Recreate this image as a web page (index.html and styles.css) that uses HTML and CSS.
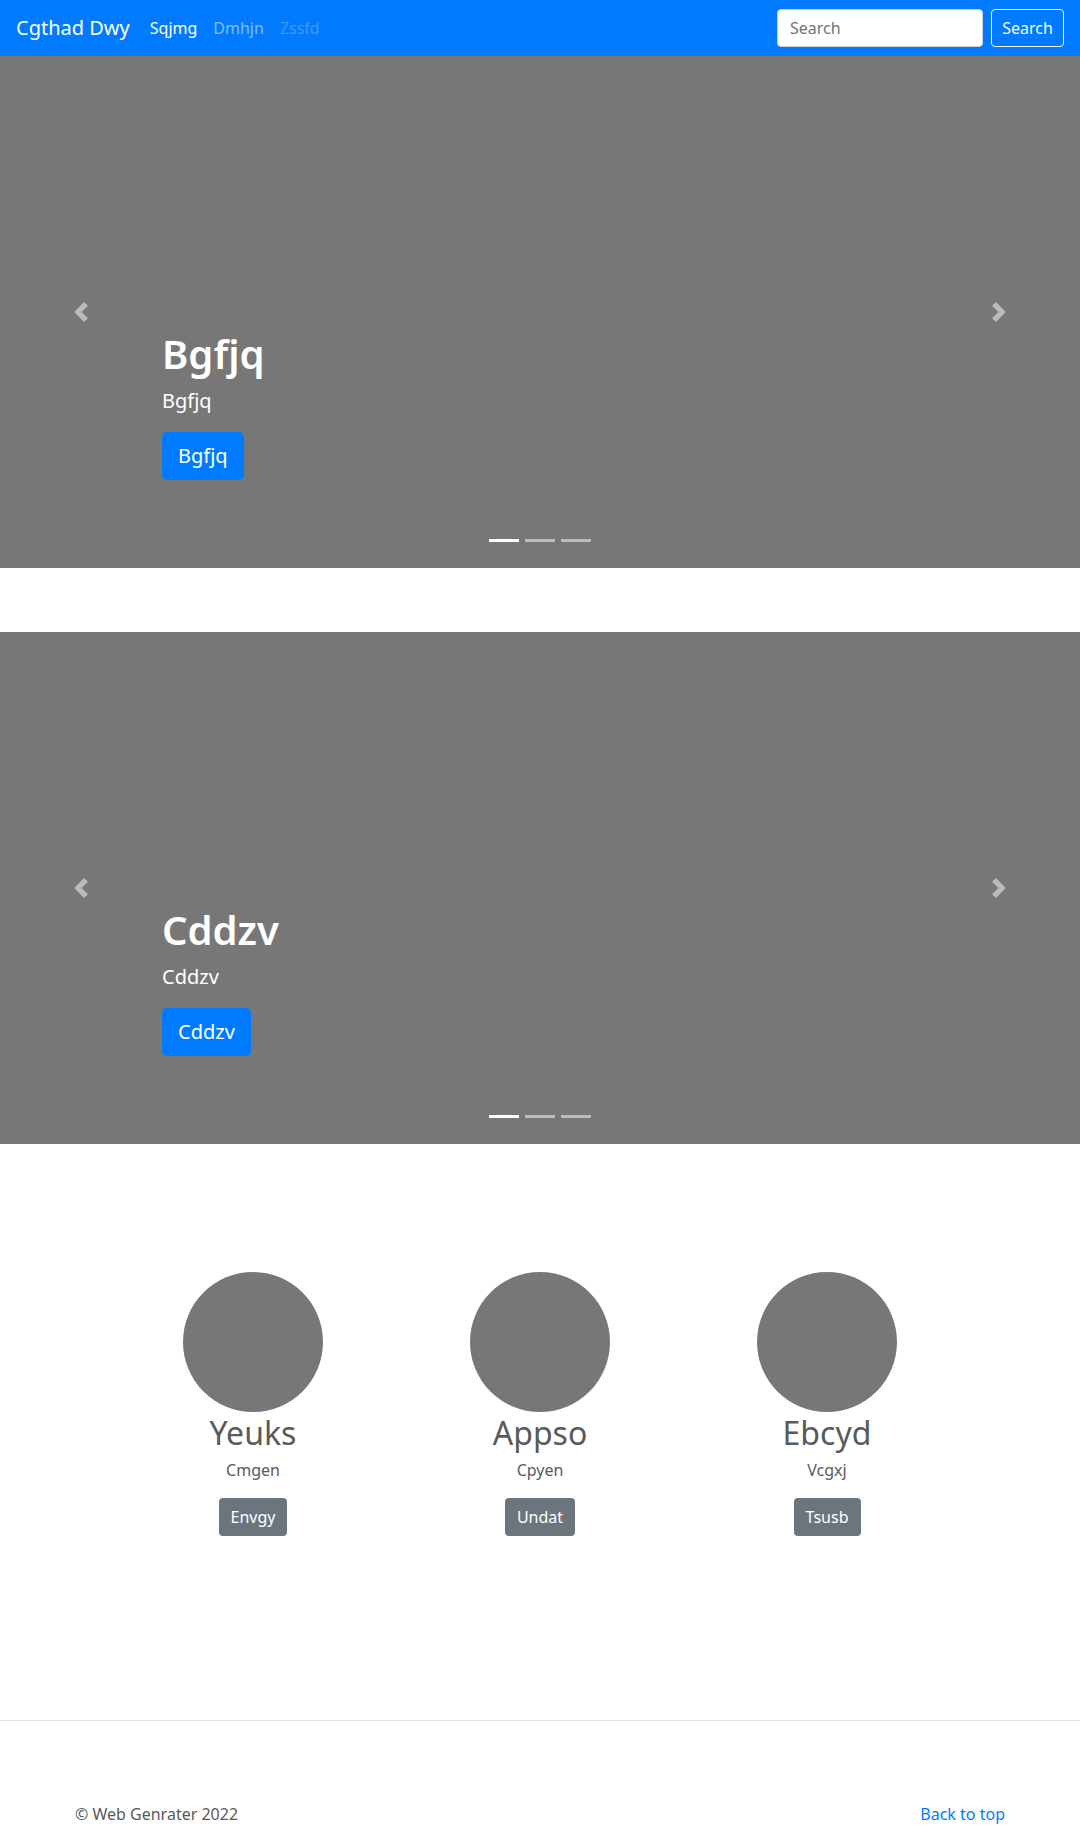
FILE: index.html
```html
<!DOCTYPE html>
<html lang="en">
<head>
<meta charset="utf-8">
<title>Cgthad Dwy</title>
<link rel="stylesheet" href="styles.css">
</head>
<body>
<nav class="navbar">
  <a class="brand" href="#">Cgthad Dwy</a>
  <ul class="nav">
    <li><a class="nav-link active" href="#">Sqjmg</a></li>
    <li><a class="nav-link" href="#">Dmhjn</a></li>
    <li><a class="nav-link disabled" href="#">Zssfd</a></li>
  </ul>
  <form class="search">
    <input class="search-input" type="text" placeholder="Search">
    <button class="btn-outline" type="button">Search</button>
  </form>
</nav>

<section class="carousel">
  <div class="caption">
    <h1>Bgfjq</h1>
    <p>Bgfjq</p>
    <div class="cta"><a class="btn-lg" href="#">Bgfjq</a></div>
  </div>
  <ol class="indicators"><li class="on"></li><li></li><li></li></ol>
  <a class="ctrl prev" href="#"><svg width="20" height="20" viewBox="0 0 8 8"><path fill="#fff" d="M5.25 0l-4 4 4 4 1.5-1.5L4.25 4l2.5-2.5L5.25 0z"/></svg></a>
  <a class="ctrl next" href="#"><svg width="20" height="20" viewBox="0 0 8 8"><path fill="#fff" d="M2.75 0l-1.5 1.5L3.75 4l-2.5 2.5L2.75 8l4-4-4-4z"/></svg></a>
</section>

<section class="carousel">
  <div class="caption">
    <h1>Cddzv</h1>
    <p>Cddzv</p>
    <div class="cta"><a class="btn-lg" href="#">Cddzv</a></div>
  </div>
  <ol class="indicators"><li class="on"></li><li></li><li></li></ol>
  <a class="ctrl prev" href="#"><svg width="20" height="20" viewBox="0 0 8 8"><path fill="#fff" d="M5.25 0l-4 4 4 4 1.5-1.5L4.25 4l2.5-2.5L5.25 0z"/></svg></a>
  <a class="ctrl next" href="#"><svg width="20" height="20" viewBox="0 0 8 8"><path fill="#fff" d="M2.75 0l-1.5 1.5L3.75 4l-2.5 2.5L2.75 8l4-4-4-4z"/></svg></a>
</section>

<section class="marketing">
  <div class="col">
    <div class="circle"></div>
    <h2>Yeuks</h2>
    <p>Cmgen</p>
    <a class="btn-secondary" href="#">Envgy</a>
  </div>
  <div class="col">
    <div class="circle"></div>
    <h2>Appso</h2>
    <p>Cpyen</p>
    <a class="btn-secondary" href="#">Undat</a>
  </div>
  <div class="col">
    <div class="circle"></div>
    <h2>Ebcyd</h2>
    <p>Vcgxj</p>
    <a class="btn-secondary" href="#">Tsusb</a>
  </div>
</section>

<hr class="divider">

<footer class="footer">
  <p>&copy; Web Genrater 2022</p>
  <a class="top-link" href="#">Back to top</a>
</footer>
</body>
</html>
```

FILE: styles.css
```css
* { box-sizing: border-box; }

body {
  margin: 0;
  font-family: "Segoe UI", "Noto Sans", "Open Sans", sans-serif;
  font-size: 16px;
  line-height: 1.5;
  color: #5a5a5a;
  background: #fff;
}

a { text-decoration: none; }

.navbar {
  display: flex;
  align-items: center;
  height: 56px;
  padding: 0 16px;
  background: #007bff;
}

.brand {
  color: #fff;
  font-size: 20px;
  line-height: 30px;
  margin-right: 12px;
}

.nav {
  display: flex;
  list-style: none;
  margin: 0;
  padding: 0;
}

.nav-link {
  display: block;
  padding: 8px;
  color: rgba(255, 255, 255, 0.5);
  font-size: 16px;
  line-height: 24px;
}

.nav-link.active { color: #fff; }
.nav-link.disabled { color: rgba(255, 255, 255, 0.25); }

.search {
  display: flex;
  align-items: center;
  margin: 0 0 0 auto;
}

.search-input {
  width: 206px;
  height: 38px;
  margin-right: 8px;
  padding: 6px 12px;
  border: 1px solid #ced4da;
  border-radius: 4px;
  font-family: inherit;
  font-size: 16px;
  color: #495057;
  background: #fff;
}

.search-input::placeholder { color: #6c757d; }

.btn-outline {
  height: 38px;
  width: 73px;
  padding: 0;
  border: 1px solid #f8f9fa;
  border-radius: 4px;
  background: transparent;
  color: #f8f9fa;
  font-family: inherit;
  font-size: 16px;
}

.carousel {
  position: relative;
  height: 512px;
  margin-bottom: 64px;
  background: #777;
  display: flex;
  flex-direction: column;
  justify-content: flex-end;
  padding: 0 162px 88px;
}

.caption { color: #fff; }

.caption h1 {
  margin: 0 0 8px;
  font-size: 40px;
  line-height: 48px;
  font-weight: 600;
}

.caption p {
  margin: 0 0 16px;
  font-size: 20px;
  line-height: 30px;
}

.cta { display: flex; }

.btn-lg {
  display: inline-block;
  padding: 9px 16px;
  font-size: 20px;
  line-height: 30px;
  color: #fff;
  background: #007bff;
  border-radius: 5px;
}

.indicators {
  position: absolute;
  left: 0;
  right: 0;
  bottom: 26px;
  margin: 0;
  padding: 0;
  list-style: none;
  display: flex;
  justify-content: center;
  gap: 6px;
}

.indicators li {
  width: 30px;
  height: 3px;
  background: #fff;
  opacity: 0.5;
}

.indicators li.on { opacity: 1; }

.ctrl {
  position: absolute;
  top: 0;
  bottom: 0;
  width: 15%;
  display: flex;
  align-items: center;
  justify-content: center;
  opacity: 0.5;
}

.ctrl.prev { left: 0; }
.ctrl.next { right: 0; }

.marketing {
  width: 861px;
  margin: 0 auto;
  padding-top: 64px;
  display: grid;
  grid-template-columns: repeat(3, 1fr);
}

.col { text-align: center; }

.circle {
  width: 140px;
  height: 140px;
  margin: 0 auto;
  border-radius: 50%;
  background: #777;
}

.col h2 {
  margin: 0 0 6px;
  padding-top: 2px;
  font-size: 32px;
  line-height: 38px;
  font-weight: 400;
}

.col p {
  margin: 0 12px 16px;
  font-size: 16px;
  line-height: 24px;
}

.btn-secondary {
  display: inline-block;
  padding: 7px 12px;
  font-size: 16px;
  line-height: 24px;
  color: #fff;
  background: #6c757d;
  border-radius: 4px;
}

.divider {
  margin: 184px 0 0;
  border: 0;
  border-top: 1px solid rgba(0, 0, 0, 0.1);
}

.footer {
  width: 930px;
  margin: 0 auto;
  padding-top: 81px;
  display: flex;
  justify-content: space-between;
}

.footer p { margin: 0; }

.top-link { color: #007bff; }
```
